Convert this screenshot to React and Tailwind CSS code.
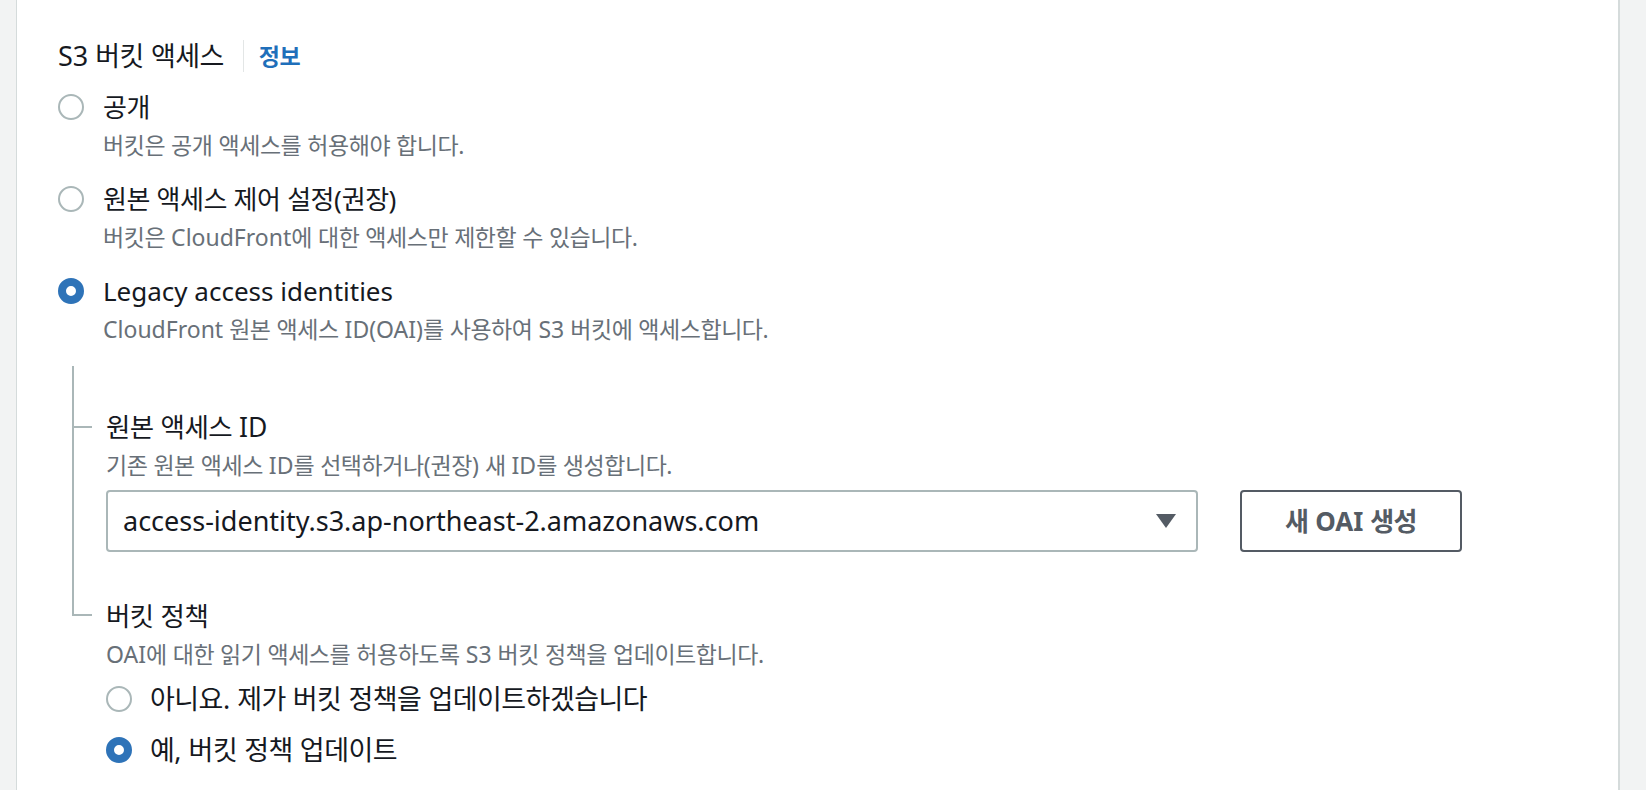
import React from "react";

const HANGUL = /([\uAC00-\uD7A3]+)/;

// Hangul runs get a slightly tighter tracking so they sit like the console font
const Ko = ({ children }) =>
  String(children)
    .split(HANGUL)
    .map((part, i) =>
      i % 2 === 1 ? (
        <span key={i} className="tracking-[-0.02em]">
          {part}
        </span>
      ) : (
        <React.Fragment key={i}>{part}</React.Fragment>
      )
    );

const Radio = ({ checked }) =>
  checked ? (
    <span className="block w-[26px] h-[26px] shrink-0 rounded-full border-[8px] border-[#2e73b8] bg-white" />
  ) : (
    <span className="block w-[26px] h-[26px] shrink-0 rounded-full border-2 border-[#aab7b8] bg-white" />
  );

const options = [
  { label: "공개", desc: "버킷은 공개 액세스를 허용해야 합니다.", checked: false },
  {
    label: "원본 액세스 제어 설정(권장)",
    desc: "버킷은 CloudFront에 대한 액세스만 제한할 수 있습니다.",
    checked: false,
  },
  {
    label: "Legacy access identities",
    desc: "CloudFront 원본 액세스 ID(OAI)를 사용하여 S3 버킷에 액세스합니다.",
    checked: true,
  },
];

const policyOptions = [
  { label: "아니요. 제가 버킷 정책을 업데이트하겠습니다", checked: false },
  { label: "예, 버킷 정책 업데이트", checked: true },
];

const App = () => {
  return (
    <div className="flex h-[790px] w-full overflow-hidden bg-[#f2f3f3] text-[#16191f] font-[family-name:'Noto_Sans','Noto_Sans_CJK_KR',sans-serif]">
      {/* left gutter */}
      <div className="w-[16px] shrink-0" />

      {/* panel */}
      <div className="flex-1 bg-white border-l border-r-2 border-[#d5dbdb] pl-[41px] pt-[38px]">
        {/* Title */}
        <div className="flex items-center h-[36px]">
          <span className="text-[27px] leading-[36px]">
            <Ko>S3 버킷 액세스</Ko>
          </span>
          <span className="w-px h-[32px] bg-[#e3e6e6] ml-[19px] mr-[15px]" />
          <span className="text-[23px] font-bold text-[#1f6fba]">
            <Ko>정보</Ko>
          </span>
        </div>

        {/* Options */}
        <div className="mt-[15px] flex flex-col gap-[22px]">
          {options.map((opt) => (
            <div key={opt.label}>
              <div className="flex items-center h-[36px] gap-[19px]">
                <Radio checked={opt.checked} />
                <span className="text-[26px] leading-[36px]">
                  <Ko>{opt.label}</Ko>
                </span>
              </div>
              <div className="mt-[6px] pl-[45px] text-[23px] leading-[28px] text-[#687078]">
                <Ko>{opt.desc}</Ko>
              </div>
            </div>
          ))}
        </div>

        {/* Nested settings */}
        <div className="mt-[23px] ml-[14px] flex flex-col">
          {/* Origin access ID */}
          <div className="flex">
            <div className="w-[20px] shrink-0 flex flex-col">
              <div className="h-[62px] border-l-2 border-b-2 border-[#aab7b8]" />
              <div className="flex-1 border-l-2 border-[#aab7b8]" />
            </div>
            <div className="pl-[14px] pt-[43px]">
              <div className="text-[26.5px] leading-[36px]">
                <Ko>원본 액세스 ID</Ko>
              </div>
              <div className="mt-[6px] text-[23px] leading-[28px] text-[#687078]">
                <Ko>기존 원본 액세스 ID를 선택하거나(권장) 새 ID를 생성합니다.</Ko>
              </div>
              <div className="mt-[11px] flex items-center gap-[42px]">
                <div className="w-[1092px] h-[62px] flex items-center justify-between border-2 border-[#aab7b8] rounded-[4px] pl-[15px] pr-[20px]">
                  <span className="text-[27px]">
                    access-identity.s3.ap-northeast-2.amazonaws.com
                  </span>
                  <svg width="20" height="16" viewBox="0 0 20 16">
                    <polygon points="0,1 20,1 10,15" fill="#545b64" />
                  </svg>
                </div>
                <button className="w-[222px] h-[62px] border-2 border-[#545b64] rounded-[4px] text-[26px] font-bold text-[#545b64]">
                  <Ko>새 OAI 생성</Ko>
                </button>
              </div>
            </div>
          </div>

          {/* Bucket policy */}
          <div className="flex">
            <div className="w-[20px] shrink-0">
              <div className="h-[64px] border-l-2 border-b-2 border-[#aab7b8]" />
            </div>
            <div className="pl-[14px] pt-[46px]">
              <div className="text-[26.5px] leading-[36px]">
                <Ko>버킷 정책</Ko>
              </div>
              <div className="mt-[6px] text-[23px] leading-[28px] text-[#687078]">
                <Ko>OAI에 대한 읽기 액세스를 허용하도록 S3 버킷 정책을 업데이트합니다.</Ko>
              </div>
              <div className="mt-[13px] flex flex-col gap-[15px]">
                {policyOptions.map((opt) => (
                  <div key={opt.label} className="flex items-center h-[36px] gap-[18px]">
                    <Radio checked={opt.checked} />
                    <span className="text-[27px] leading-[36px]">
                      <Ko>{opt.label}</Ko>
                    </span>
                  </div>
                ))}
              </div>
            </div>
          </div>
        </div>
      </div>

      {/* right gutter */}
      <div className="w-[26px] shrink-0" />
    </div>
  );
};

export default App;
